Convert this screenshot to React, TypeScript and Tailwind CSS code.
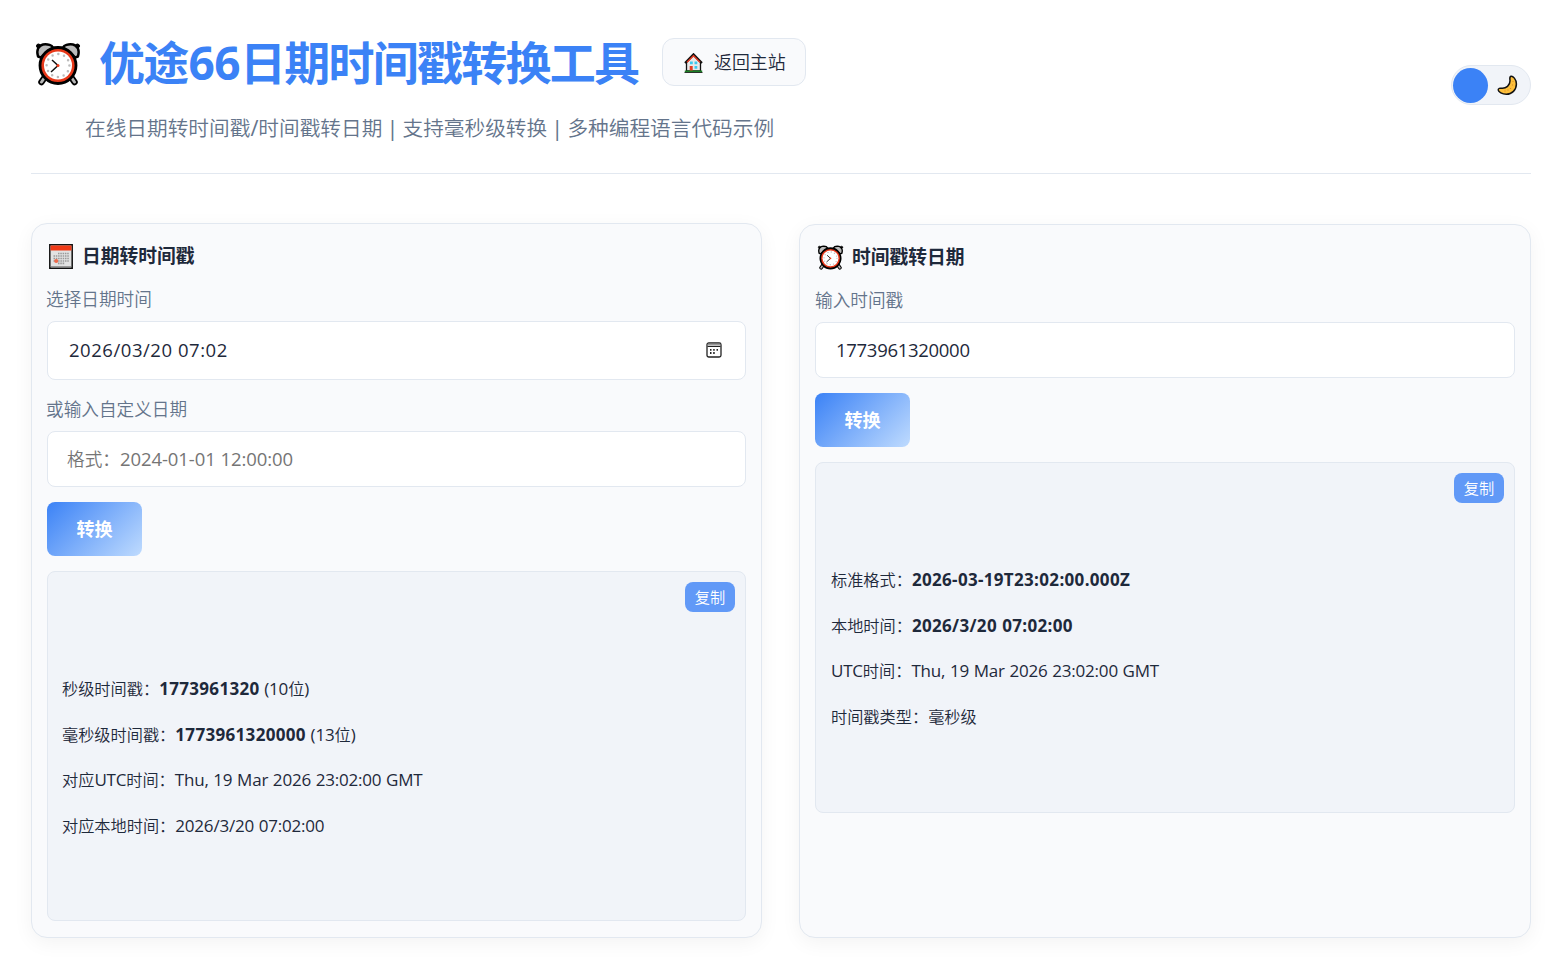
import React from 'react';

interface TextProps {
  children: string;
  bold?: boolean;
}

// 中文与西文分开排版：中文字号略小于西文
const Mixed: React.FC<TextProps> = ({ children, bold }) => {
  const parts = children.split(/([\u3000-\u9fff\uff00-\uffef]+)/).filter(Boolean);
  return (
    <>
      {parts.map((part, index) =>
        /[\u3000-\u9fff\uff00-\uffef]/.test(part) ? (
          <span key={index} className={`text-[0.953em] tracking-normal ${bold ? 'font-bold' : 'font-[350]'}`}>
            {part}
          </span>
        ) : (
          <span key={index} className={bold ? 'font-bold tracking-[0.019em]' : ''}>
            {part}
          </span>
        )
      )}
    </>
  );
};

const AlarmClock: React.FC<{ className?: string }> = ({ className }) => (
  <svg viewBox="0 0 46 44" className={className}>
    <g stroke="#000" strokeLinejoin="round" strokeLinecap="round">
      <path d="M10 35 6.500 40M36 35 39.500 40" strokeWidth="6.500" />
      <path d="M10 35 6.500 40M36 35 39.500 40" stroke="#b8b8b8" strokeWidth="3" />
      <path d="M3 14.500C1 8 3.500 3.500 8 2.500c5-.8 9 1 10 3L6 15.500ZM43 14.500c2-6.500-.5-11-5-12-5-.8-9 1-10 3l12 10Z" fill="#bcbcbc" strokeWidth="2.400" />
      <circle cx="3.500" cy="4" r="2" strokeWidth="1" />
      <circle cx="42.500" cy="4" r="2" strokeWidth="1" />
      <circle cx="23" cy="23.500" r="18" fill="#e8391a" strokeWidth="2.800" />
    </g>
    <circle cx="23" cy="23.500" r="14" fill="#fff" />
    <circle cx="23" cy="23.500" r="11.400" fill="none" stroke="#bbb" strokeWidth="2.500" strokeLinecap="round" strokeDasharray="0 5.969" />
    <path d="m17 18 6 5.500-7 6.500" fill="none" stroke="#111" strokeWidth="1.500" />
    <circle cx="23" cy="23.500" r="1.500" fill="#f03a17" />
  </svg>
);

const Calendar: React.FC = () => (
  <svg viewBox="0 0 24 25" className="h-[25px] w-6">
    <path d="M.8.800h22.400v23.400H.8z" fill="#e2e2e2" stroke="#111" strokeWidth="1.500" />
    <path d="M1.500 1.500h21v5h-21z" fill="#f03a17" />
    <path d="M2 22.500h20" stroke="#999" />
    <path d="M9 9.500h11M4.500 12h15.500M4.500 14.500h15.500M4.500 17h15.500M9 19.300h7" stroke="#999" strokeWidth="1.700" strokeDasharray="1.500 .8" />
    <circle cx="7.200" cy="17" r="2" fill="#f06a4a" />
  </svg>
);

const House: React.FC = () => (
  <svg viewBox="0 0 19 20" className="mt-px h-5 w-[19px]">
    <path d="M2.500 18V9.500L9.500 2.200l7 7.300V18Z" fill="#e8e8e8" stroke="#111" strokeWidth="1.300" />
    <path d="M1 10 9.500 1.200 18 10" fill="none" stroke="#111" strokeWidth="2" />
    <path d="m3 9.200 6.500-6.500L16 9.200" fill="none" stroke="#ee3c22" strokeWidth="1.300" />
    <path d="M6 8.500h2.800v2.800H6zM10.500 8.500h2.800v2.800h-2.800zM10.500 13h2.800v2.800h-2.800z" fill="#3cc8ee" />
    <path d="M5.700 13h3v5h-3z" fill="#e33c22" />
    <path d="M.8 17.500h17.400v2H.8z" fill="#1c7f25" />
    <path d="M.5 19.500h18" stroke="#111" strokeWidth=".8" />
  </svg>
);

const Moon: React.FC = () => (
  <svg viewBox="0 0 21 21" className="h-[21px] w-[21px]">
    <path d="M14 1.200c1.800-.4 5.400 3 5.400 7.800 0 6-4.500 10.200-10 10.200-4.200 0-8-2.300-8.200-4.200-.1-1.800 1.800-2 3.300-1.800 4.500.5 8.700-3 8.500-7.400 0-1.800-.9-4 1-4.600Z" fill="#fdbf3b" stroke="#111" strokeWidth="1.500" />
    <path d="M15.500 9.500v1M11 14.500v1M13.500 13v1M8 15.500v1M16 6v.8" stroke="#d98a22" strokeWidth="1.200" />
  </svg>
);

const PickerIcon: React.FC = () => (
  <svg viewBox="0 0 16 16" className="h-4 w-4">
    <rect x="1" y="1" width="14" height="14" rx="1.800" fill="#fff" stroke="#222" strokeWidth="1.300" />
    <path d="M1.700 2.600h12.600" stroke="#999" strokeWidth="2" />
    <path d="M1.500 4.500h13" stroke="#222" strokeWidth="1" />
    <path d="M4 7.800h1.500M7.200 7.800h1.500M10.500 7.800H12M4 11h1.500M7.200 11h1.500" stroke="#222" strokeWidth="1.800" />
  </svg>
);

const ConvertButton: React.FC = () => (
  <button className="mt-[15px] flex h-[54px] w-[95px] items-center justify-center rounded-lg bg-linear-[135deg,#3b82f6,#bfdbfe] pt-[2px] text-[19px] font-bold text-white">
    <Mixed bold>转换</Mixed>
  </button>
);

interface ResultRow {
  label: string;
  value: string;
  suffix?: string;
  strong?: boolean;
}

const Result: React.FC<{ rows: ResultRow[]; className: string }> = ({ rows, className }) => (
  <div className={`relative mt-[15px] rounded-lg border border-[#e2e8f0] bg-[#f1f4f9] pt-[94px] text-[17px] tracking-[-0.012em] [word-spacing:0.03em] ${className}`}>
    <button className="absolute top-[10px] right-[10px] flex h-[30px] w-[50px] items-center justify-center rounded-lg bg-[#6199f7] pt-px text-[16px] text-white">
      <Mixed>复制</Mixed>
    </button>
    {rows.map((row) => (
      <p key={row.label} className="h-[45.5px] leading-[45.5px] whitespace-pre">
        <Mixed>{row.label}</Mixed>
        <Mixed bold={row.strong}>{row.value}</Mixed>
        {row.suffix && <Mixed>{row.suffix}</Mixed>}
      </p>
    ))}
  </div>
);

const CARD = 'rounded-2xl border border-[#e2e8f0] bg-[#f9fafc] px-[15px] pt-4 shadow-[0_5px_20px_rgba(0,0,0,0.05)]';
const LABEL = 'h-[22px] text-[18.5px] leading-[22px] text-[#64748b]';
const INPUT = 'flex items-center rounded-lg border border-[#e2e8f0] bg-white text-[18.5px]';

export default function App() {
  const dateRows: ResultRow[] = [
    { label: '秒级时间戳：', value: '1773961320', suffix: ' (10位)', strong: true },
    { label: '毫秒级时间戳：', value: '1773961320000', suffix: ' (13位)', strong: true },
    { label: '对应UTC时间：', value: 'Thu, 19 Mar 2026 23:02:00 GMT' },
    { label: '对应本地时间：', value: '2026/3/20 07:02:00' },
  ];
  const stampRows: ResultRow[] = [
    { label: '标准格式：', value: '2026-03-19T23:02:00.000Z', strong: true },
    { label: '本地时间：', value: '2026/3/20 07:02:00', strong: true },
    { label: 'UTC时间：', value: 'Thu, 19 Mar 2026 23:02:00 GMT' },
    { label: '时间戳类型：', value: '毫秒级' },
  ];

  return (
    <div className="h-[965px] overflow-hidden bg-white pr-[29px] pl-[31px] font-['Open_Sans','Noto_Sans_CJK_SC',sans-serif] text-[#1e293b]">
      <header className="flex h-[174px] justify-between border-b border-[#e2e8f0]">
        <div>
          <div className="mt-[38px] flex h-12 items-center">
            <AlarmClock className="mt-1 ml-1 h-[44px] w-[46px]" />
            <h1 className="ml-[18px] w-[539px] text-[46px] leading-[48px] font-bold tracking-[-0.038em] whitespace-nowrap text-[#3b82f6]">
              优途<span className="ml-px tracking-[-0.013em]">66</span>日期时间戳转换工具
            </h1>
            <a className="ml-6 flex h-12 w-[144px] items-center rounded-xl border border-[#e2e8f0] bg-[#f9fafc] pl-[21px] text-[18.8px]">
              <House />
              <span className="mt-px ml-[11px]">
                <Mixed>返回主站</Mixed>
              </span>
            </a>
          </div>
          <p className="mt-[27px] ml-[54px] text-[21.7px] leading-[30px] whitespace-nowrap text-[#64748b] [word-spacing:-0.07em]">
            <Mixed>在线日期转时间戳/时间戳转日期 | 支持毫秒级转换 | 多种编程语言代码示例</Mixed>
          </p>
        </div>
        <button className="mt-[65px] flex h-10 w-20 items-center rounded-full border border-[#e2e8f0] bg-[#f1f4f9] pl-px">
          <span className="h-[35px] w-[35px] rounded-full bg-[#3b82f6]" />
          <span className="ml-[9px]">
            <Moon />
          </span>
        </button>
      </header>

      <main className="mt-[49px] flex items-start gap-[37px]">
        <section className={`h-[715px] w-[731px] ${CARD}`}>
          <h2 className="flex h-8 items-center text-[19.7px] font-bold">
            <span className="ml-[2px]">
              <Calendar />
            </span>
            <span className="ml-[9px]">
              <Mixed bold>日期转时间戳</Mixed>
            </span>
          </h2>
          <div className={`mt-4 -ml-px ${LABEL}`}>
            <Mixed>选择日期时间</Mixed>
          </div>
          <div className={`mt-[11px] h-[59px] justify-between pr-[23px] pb-px pl-[21px] tracking-[0.029em] ${INPUT}`}>
            <Mixed>2026/03/20 07:02</Mixed>
            <PickerIcon />
          </div>
          <div className={`mt-[18px] -ml-px ${LABEL}`}>
            <Mixed>或输入自定义日期</Mixed>
          </div>
          <div className={`mt-[11px] h-14 pl-[19px] tracking-[-0.004em] whitespace-pre text-[#757575] ${INPUT}`}>
            <Mixed>格式：2024-01-01 12:00:00</Mixed>
          </div>
          <ConvertButton />
          <Result rows={dateRows} className="h-[350px] pl-[14px]" />
        </section>

        <section className={`mt-px h-[714px] w-[732px] ${CARD}`}>
          <h2 className="flex h-8 items-center text-[19.7px] font-bold">
            <AlarmClock className="ml-[2px] h-[25px] w-[27px]" />
            <span className="-mt-px ml-[8px]">
              <Mixed bold>时间戳转日期</Mixed>
            </span>
          </h2>
          <div className={`mt-4 ${LABEL}`}>
            <Mixed>输入时间戳</Mixed>
          </div>
          <div className={`mt-[11px] h-14 pl-[20px] tracking-[-0.016em] ${INPUT}`}>
            <Mixed>1773961320000</Mixed>
          </div>
          <ConvertButton />
          <Result rows={stampRows} className="h-[351px] pl-[15px]" />
        </section>
      </main>
    </div>
  );
}
